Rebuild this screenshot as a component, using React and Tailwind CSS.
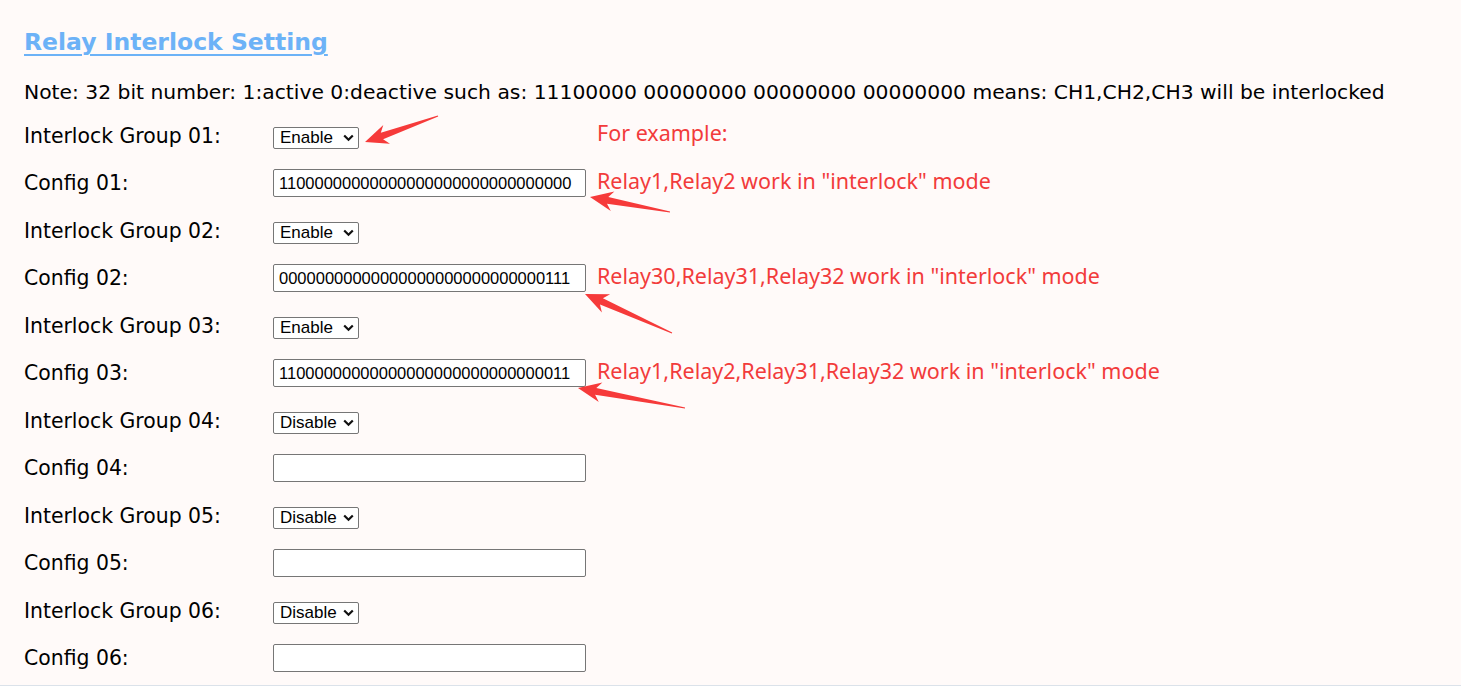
import React from 'react';

const LABEL_FONT = { fontFamily: '"DejaVu Sans", Verdana, sans-serif' };
const NOTE_FONT = { fontFamily: '"Noto Sans", "Open Sans", sans-serif' };
const CONTROL_FONT = { fontFamily: '"Liberation Sans", Arial, sans-serif' };

const GROUPS = [
  {
    id: '01',
    mode: 'Enable',
    value: '11000000000000000000000000000000',
    groupNote: 'For example:',
    configNote: 'Relay1,Relay2 work in "interlock" mode',
  },
  {
    id: '02',
    mode: 'Enable',
    value: '00000000000000000000000000000111',
    configNote: 'Relay30,Relay31,Relay32 work in "interlock" mode',
  },
  {
    id: '03',
    mode: 'Enable',
    value: '11000000000000000000000000000011',
    configNote: 'Relay1,Relay2,Relay31,Relay32 work in "interlock" mode',
  },
  { id: '04', mode: 'Disable', value: '' },
  { id: '05', mode: 'Disable', value: '' },
  { id: '06', mode: 'Disable', value: '' },
];

// callout arrows: tip -> tail, in page pixels
const ARROWS = [
  { tip: [365, 142], tail: [438, 116] },
  { tip: [590, 197], tail: [670, 212] },
  { tip: [585, 294], tail: [672, 333] },
  { tip: [578, 388], tail: [685, 408] },
];

function arrowPoints({ tip, tail }) {
  const dx = tail[0] - tip[0];
  const dy = tail[1] - tip[1];
  const len = Math.hypot(dx, dy);
  const ux = dx / len;
  const uy = dy / len;
  const nx = -uy;
  const ny = ux;
  const at = (along, side) => [tip[0] + ux * along + nx * side, tip[1] + uy * along + ny * side];
  const pts = [
    tip,
    at(23, -10),
    at(18, -3.5),
    at(len, -0.6),
    at(len, 0.6),
    at(18, 3.5),
    at(23, 10),
  ];
  return pts.map((p) => p.map((v) => v.toFixed(1)).join(',')).join(' ');
}

function ModeSelect({ value }) {
  return (
    <div className="relative flex">
      <select
        defaultValue={value}
        className="block appearance-none w-[86px] h-[22px] pl-[6px] pr-[18px] border border-[#767676] rounded-[2px] bg-white text-[17px] leading-none text-black"
        style={CONTROL_FONT}
      >
        <option>Enable</option>
        <option>Disable</option>
      </select>
      <svg
        className="absolute right-[5px] top-[7px] pointer-events-none"
        width="11"
        height="8"
        viewBox="0 0 11 8"
      >
        <path d="M1.2 1.5 L5.5 5.8 L9.8 1.5" fill="none" stroke="#111" strokeWidth="2.2" />
      </svg>
    </div>
  );
}

function ConfigInput({ value }) {
  return (
    <input
      type="text"
      defaultValue={value}
      className="block w-[313px] h-[28px] px-[5px] border border-[#767676] rounded-[2px] bg-white text-[16.5px] text-black outline-none"
      style={CONTROL_FONT}
    />
  );
}

function Row({ label, control, note, controlPad = '' }) {
  return (
    <div className="flex items-center h-[47.5px]">
      <span className="w-[249px] shrink-0 text-[20.4px] leading-[30px] text-black" style={LABEL_FONT}>
        {label}
      </span>
      <div className={`w-[324px] shrink-0 flex items-center ${controlPad}`}>{control}</div>
      <span className="text-[21.5px] leading-[32px] text-[#f23b3b] whitespace-nowrap mb-[5px]" style={NOTE_FONT}>
        {note}
      </span>
    </div>
  );
}

export default function App() {
  return (
    <div className="relative w-[1461px] h-[686px] overflow-hidden bg-[#fffaf9] flex flex-col">
      <div className="flex-1 pl-[24px]">
        <div className="h-[66px] pt-[25px]">
          <a
            href="#"
            className="text-[23.5px] font-bold text-[#6cb2f7] underline underline-offset-[4px] decoration-[2px]"
            style={LABEL_FONT}
          >
            Relay Interlock Setting
          </a>
        </div>
        <p className="h-[46px] pt-[6px] flex items-center text-[20.3px] text-black whitespace-nowrap" style={LABEL_FONT}>
          Note: 32 bit number: 1:active 0:deactive such as: 11100000 00000000 00000000 00000000 means: CH1,CH2,CH3 will be interlocked
        </p>
        {GROUPS.map((g) => (
          <React.Fragment key={g.id}>
            <Row
              label={`Interlock Group ${g.id}:`}
              control={<ModeSelect value={g.mode} />}
              controlPad="pt-[4px]"
              note={g.groupNote}
            />
            <Row label={`Config ${g.id}:`} control={<ConfigInput value={g.value} />} note={g.configNote} />
          </React.Fragment>
        ))}
      </div>
      <div className="h-px bg-[#dbe2ea]" />

      <svg className="absolute inset-0 pointer-events-none" width="1461" height="686">
        {ARROWS.map((a, i) => (
          <polygon key={i} points={arrowPoints(a)} fill="#f63a3a" />
        ))}
      </svg>
    </div>
  );
}
